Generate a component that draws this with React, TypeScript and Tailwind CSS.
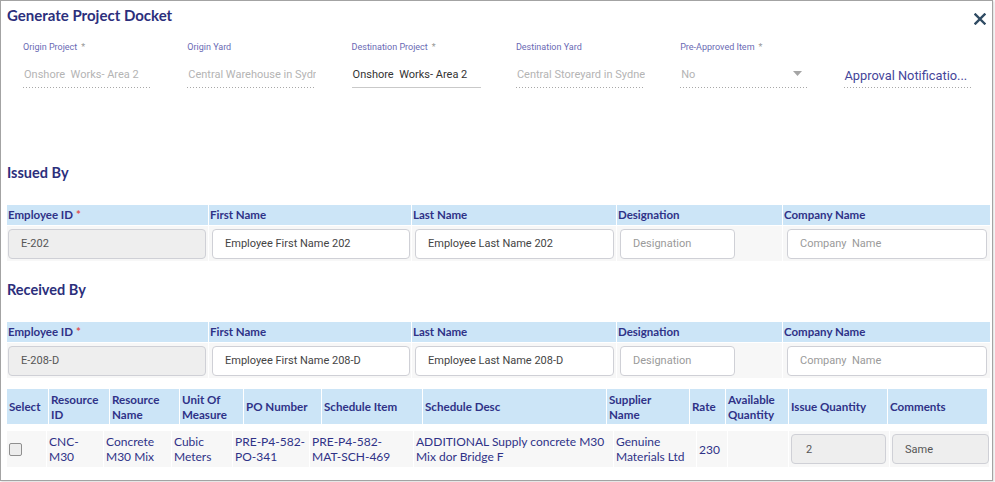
const topFields = [
  { label: "Origin Project", req: true, value: "Onshore  Works- Area 2", kind: "disabled" },
  { label: "Origin Yard", req: false, value: "Central Warehouse in Sydney", kind: "disabled" },
  { label: "Destination Project", req: true, value: "Onshore  Works- Area 2", kind: "active" },
  { label: "Destination Yard", req: false, value: "Central Storeyard in Sydney", kind: "disabled" },
  { label: "Pre-Approved Item", req: true, value: "No", kind: "select" },
];

const dotted =
  "h-px bg-[repeating-linear-gradient(to_right,#a8a8a8_0_1px,transparent_1px_3px)]";

function TopField({ f }: { f: (typeof topFields)[number] }) {
  return (
    <div className="w-[129px] shrink-0">
      <div className="h-[14px] text-[9px] leading-[14px] text-[#6a6ab4] whitespace-nowrap">
        {f.label}
        {f.req && <span className="ml-1 text-[#999]">*</span>}
      </div>
      <div className="mt-[10px] flex h-[23px] items-center overflow-hidden pl-[1px] text-[11px] whitespace-pre">
        <span className={f.kind === "active" ? "text-[#333]" : "text-[#b4b4b4]"}>{f.value}</span>
        {f.kind === "select" && (
          <svg className="ml-auto mr-[7px] mb-[5px]" width="9" height="5" viewBox="0 0 9 5">
            <path d="M0 0h9L4.5 5z" fill="#a5a5a5" />
          </svg>
        )}
      </div>
      {f.kind === "active" ? <div className="h-px bg-[#c9c9c9]" /> : <div className={dotted} />}
    </div>
  );
}

function PersonBlock({ title, id, first, last }: { title: string; id: string; first: string; last: string }) {
  const input =
    "h-[30px] rounded-[4px] border border-[#cfd0d6] px-[12px] text-[11px] flex items-center font-['Roboto',sans-serif]";
  return (
    <div>
      <div className="pl-[6px] text-[14.5px] font-bold text-[#2c2f7c] leading-[20px]">{title}</div>
      <div className="mt-[22px] ml-[6px] grid grid-cols-[201px_202px_204px_165px_207px] gap-px bg-white">
        {["Employee ID", "First Name", "Last Name", "Designation", "Company Name"].map((h, i) => (
          <div key={h} className="h-[20px] bg-[#cce5f7] pl-[1px] text-[11.5px] font-bold leading-[20px] text-[#2f3287]">
            {h}
            {i === 0 && <span className="ml-[3px] text-[#e0524f]">*</span>}
          </div>
        ))}
        <div className="h-[35px] bg-[#f7f7f7] pl-[1px] pr-[2px] pt-[3px]">
          <div className={input + " bg-[#eeeeee] text-[#555]"}>{id}</div>
        </div>
        <div className="h-[35px] bg-[#f7f7f7] pl-[3px] pr-[1px] pt-[3px]">
          <div className={input + " bg-white text-[#444]"}>{first}</div>
        </div>
        <div className="h-[35px] bg-[#f7f7f7] pl-[3px] pr-[2px] pt-[3px]">
          <div className={input + " bg-white text-[#444]"}>{last}</div>
        </div>
        <div className="h-[35px] bg-[#f7f7f7] pl-[3px] pt-[3px]">
          <div className={input + " w-[115px] bg-white text-[#9a9a9a]"}>Designation</div>
        </div>
        <div className="h-[35px] bg-[#f7f7f7] pl-[4px] pr-[3px] pt-[3px]">
          <div className={input + " bg-white text-[#9a9a9a] whitespace-pre"}>Company  Name</div>
        </div>
      </div>
    </div>
  );
}

const resHeaders = [
  "Select",
  "Resource\nID",
  "Resource\nName",
  "Unit Of\nMeasure",
  "PO Number",
  "Schedule Item",
  "Schedule Desc",
  "Supplier\nName",
  "Rate",
  "Available\nQuantity",
  "Issue Quantity",
  "Comments",
];

export default function App() {
  return (
    <div className="h-[482px] w-[995px] bg-white font-['Roboto',sans-serif]">
      <div className="h-[481px] w-[993px] overflow-hidden border border-[#a3a3a3] shadow-[1px_1px_2px_rgba(0,0,0,0.15)]">
        <div className="flex items-start justify-between pl-[6px] pr-[6px] pt-[3px]">
          <h1 className="font-['Lato',sans-serif] text-[15px] font-bold leading-[22px] text-[#2c2f7c]">
            Generate Project Docket
          </h1>
          <svg className="mt-[9px]" width="12" height="12" viewBox="0 0 12 12">
            <path d="M1.5 1.5l9 9M10.5 1.5l-9 9" stroke="#2f4b63" strokeWidth="2.4" strokeLinecap="square" />
          </svg>
        </div>

        <div className="mt-[14px] flex gap-[35.3px] pl-[22px]">
          {topFields.map((f) => (
            <TopField key={f.label} f={f} />
          ))}
          <div className="w-[128px] shrink-0">
            <div className="h-[14px]" />
            <div className="mt-[10px] flex h-[23px] items-center whitespace-nowrap text-[12.8px] text-[#45459a]">
              Approval Notificatio...
            </div>
            <div className={dotted} />
          </div>
        </div>

        <div className="mt-[75px] font-['Lato',sans-serif]">
          <PersonBlock title="Issued By" id="E-202" first="Employee First Name 202" last="Employee Last Name 202" />
        </div>
        <div className="mt-[19px] font-['Lato',sans-serif]">
          <PersonBlock
            title="Received By"
            id="E-208-D"
            first="Employee First Name 208-D"
            last="Employee Last Name 208-D"
          />
        </div>

        <div className="ml-[6px] mt-[11px] w-[981px] font-['Lato',sans-serif]">
          <div className="grid grid-cols-[41px_60px_69px_63px_77px_100px_183px_82px_35px_62px_98px_99px] gap-px bg-white">
            {resHeaders.map((h) => (
              <div
                key={h}
                className="flex h-[35px] items-center whitespace-pre-line bg-[#cce5f7] pl-[2px] text-[11.6px] font-bold leading-[15px] text-[#2f3287]"
              >
                {h}
              </div>
            ))}
          </div>
          <div className="mt-[7px] grid grid-cols-[39px_56px_67px_60px_76px_103px_199px_82px_30px_60px_100px_99px] gap-px bg-white text-[12px] leading-[15px] text-[#2f3287]">
            <div className="flex h-[36px] items-center bg-[#f7f7f7] pl-[2px]">
              <span className="h-[13px] w-[13px] rounded-[2px] border border-[#8f8f8f] bg-[#ededed]" />
            </div>
            <div className="flex h-[36px] items-center bg-[#f7f7f7] pl-[2px]">CNC-<br />M30</div>
            <div className="flex h-[36px] items-center bg-[#f7f7f7] pl-[2px]">Concrete<br />M30 Mix</div>
            <div className="flex h-[36px] items-center bg-[#f7f7f7] pl-[2px]">Cubic<br />Meters</div>
            <div className="flex h-[36px] items-center bg-[#f7f7f7] pl-[2px]">PRE-P4-582-<br />PO-341</div>
            <div className="flex h-[36px] items-center bg-[#f7f7f7] pl-[2px]">PRE-P4-582-<br />MAT-SCH-469</div>
            <div className="flex h-[36px] items-center bg-[#f7f7f7] pl-[2px]">ADDITIONAL Supply concrete M30<br />Mix dor Bridge F</div>
            <div className="flex h-[36px] items-center bg-[#f7f7f7] pl-[2px]">Genuine<br />Materials Ltd</div>
            <div className="flex h-[36px] items-center bg-[#f7f7f7] pl-[2px]">230</div>
            <div className="h-[36px] bg-[#f7f7f7]" />
            <div className="h-[36px] bg-[#f7f7f7] pl-[2px] pr-[3px] pt-[3px]">
              <div className="flex h-[30px] items-center rounded-[4px] border border-[#cfd0d6] bg-[#eeeeee] pl-[14px] font-['Roboto',sans-serif] text-[11px] text-[#555]">
                2
              </div>
            </div>
            <div className="h-[36px] bg-[#f7f7f7] pl-[2px] pt-[3px]">
              <div className="flex h-[30px] items-center rounded-[4px] border border-[#cfd0d6] bg-[#eeeeee] pl-[12px] font-['Roboto',sans-serif] text-[11px] text-[#555]">
                Same
              </div>
            </div>
          </div>
        </div>
      </div>
    </div>
  );
}
